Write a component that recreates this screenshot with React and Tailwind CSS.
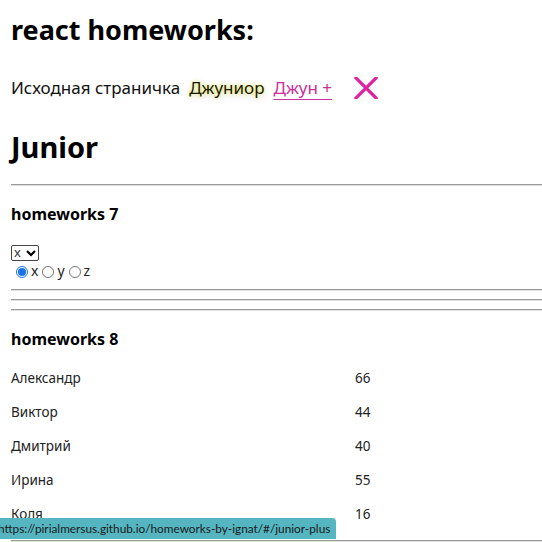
import React from "react";

const rows = [
  ["Александр", 66],
  ["Виктор", 44],
  ["Дмитрий", 40],
  ["Ирина", 55],
  ["Коля", 16],
];

export default function App() {
  return (
    <div className="relative h-[542px] w-[542px] overflow-hidden bg-white pl-[11px] text-black font-['Noto_Sans',sans-serif]">
      <h1 className="mt-[14px] text-[27px] font-bold leading-[32px]">react homeworks:</h1>

      <nav className="mt-[30px] flex h-[24px] items-center text-[17px]">
        <span className="text-[#111]">Исходная страничка</span>
        <span className="ml-[9px] text-[#1a1a00] [text-shadow:0_0_4px_#e8e84a,0_2px_10px_rgba(0,0,0,0.18)]">Джуниор</span>
        <span className="ml-[9px] text-[#c8309c] underline decoration-1 underline-offset-[5px]">Джун +</span>
        <svg className="ml-[22px]" width="24" height="22" viewBox="0 0 24 22">
          <path d="M2 1 L22 21 M22 1 L2 21" stroke="#e0229f" strokeWidth="3.2" strokeLinecap="square" />
        </svg>
      </nav>

      <h2 className="mt-[29px] text-[29px] font-bold leading-[36px]">Junior</h2>

      <div className="mt-[19px] border-t border-b border-t-[#9a9a9a] border-b-[#e0e0e0]" />

      <h3 className="mt-[16px] text-[16px] font-bold leading-[24px]">homeworks 7</h3>

      <div className="mt-[19px] flex h-[16px] w-[28px] items-center justify-between rounded-[2px] border border-[#444] pl-[2px] pr-[2px] text-[13px] leading-none text-[#333]">
        <span className="-mt-[2px]">x</span>
        <svg width="10" height="7" viewBox="0 0 10 7">
          <path d="M1 1 L5 5 L9 1" stroke="#000" strokeWidth="2.2" fill="none" />
        </svg>
      </div>

      <div className="mt-[4px] flex h-[14px] items-center pl-[5px] text-[14px] leading-none text-[#222]">
        <span className="flex h-[12px] w-[12px] shrink-0 items-center justify-center rounded-full border border-[#1a73e8] bg-white">
          <span className="h-[8px] w-[8px] rounded-full bg-[#1a73e8]" />
        </span>
        <span className="ml-[3px] -mt-[2px]">x</span>
        <span className="ml-[4px] h-[12px] w-[12px] shrink-0 rounded-full border border-[#767676]" />
        <span className="ml-[3px] -mt-[2px]">y</span>
        <span className="ml-[4px] h-[12px] w-[12px] shrink-0 rounded-full border border-[#767676]" />
        <span className="ml-[3px] -mt-[2px]">z</span>
      </div>

      <div className="mt-[10px] border-t border-b border-t-[#9a9a9a] border-b-[#e0e0e0]" />
      <div className="mt-[8px] border-t border-b border-t-[#9a9a9a] border-b-[#e0e0e0]" />
      <div className="mt-[8px] border-t border-b border-t-[#9a9a9a] border-b-[#e0e0e0]" />

      <h3 className="mt-[16px] text-[16px] font-bold leading-[24px]">homeworks 8</h3>

      <div className="mt-[10px] flex flex-col">
        {rows.map(([name, age]) => (
          <div key={name} className="flex h-[34px] items-center text-[13.5px] text-[#222]">
            <span className="w-[344px]">{name}</span>
            <span>{age}</span>
          </div>
        ))}
      </div>

      <div className="mt-[9px] border-t border-b border-t-[#9a9a9a] border-b-[#e0e0e0]" />

      <div className="absolute bottom-[3px] left-0 flex h-[21px] w-[336px] items-center overflow-hidden rounded-tr-[4px] bg-[#55b6c1] pr-[4px] text-[11.8px] leading-none text-[#1a1a1a] font-['Lato',sans-serif]">
        <span className="-ml-[2px] whitespace-nowrap">https://pirialmersus.github.io/homeworks-by-ignat/#/junior-plus</span>
      </div>
    </div>
  );
}
